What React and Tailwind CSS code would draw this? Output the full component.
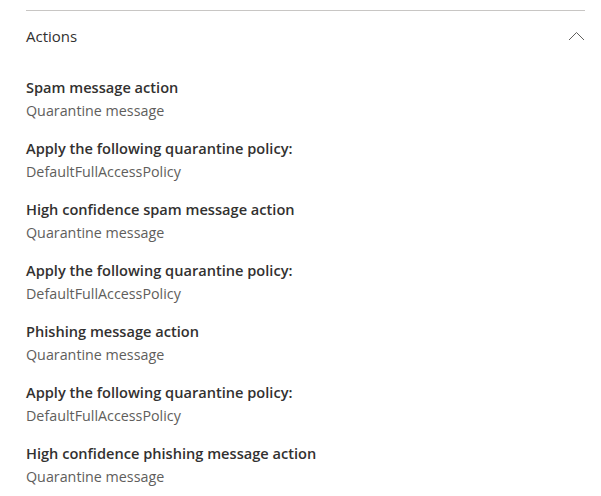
import React from 'react';

const items = [
  { label: 'Spam message action', value: 'Quarantine message' },
  { label: 'Apply the following quarantine policy:', value: 'DefaultFullAccessPolicy' },
  { label: 'High confidence spam message action', value: 'Quarantine message' },
  { label: 'Apply the following quarantine policy:', value: 'DefaultFullAccessPolicy' },
  { label: 'Phishing message action', value: 'Quarantine message' },
  { label: 'Apply the following quarantine policy:', value: 'DefaultFullAccessPolicy' },
  { label: 'High confidence phishing message action', value: 'Quarantine message' },
];

const App = () => {
  return (
    <div className="min-h-screen bg-white px-[26px] pt-[10px] font-['Open_Sans',sans-serif]">
      <div className="h-[1px] bg-[#c8c6c4] mr-[-10px]"></div>

      {/* header */}
      <div className="flex items-center justify-between mt-[15px] h-[20px]">
        <span className="text-[15px] leading-[20px] text-[#323130]">Actions</span>
        <svg width="17" height="10" viewBox="0 0 17 10" className="mr-[-10px]">
          <path d="M1 9 L8.5 1.5 L16 9" fill="none" stroke="#605e5c" strokeWidth="1" />
        </svg>
      </div>

      {/* fields */}
      <div className="flex flex-col gap-[17px] mt-[31px]">
        {items.map((item, i) => (
          <div key={i} className="flex flex-col gap-[4px]">
            <span className="text-[14.6px] leading-[20px] font-semibold text-[#323130]">{item.label}</span>
            <span className="text-[14.3px] leading-[20px] text-[#605e5c]">{item.value}</span>
          </div>
        ))}
      </div>
    </div>
  );
};

export default App;
